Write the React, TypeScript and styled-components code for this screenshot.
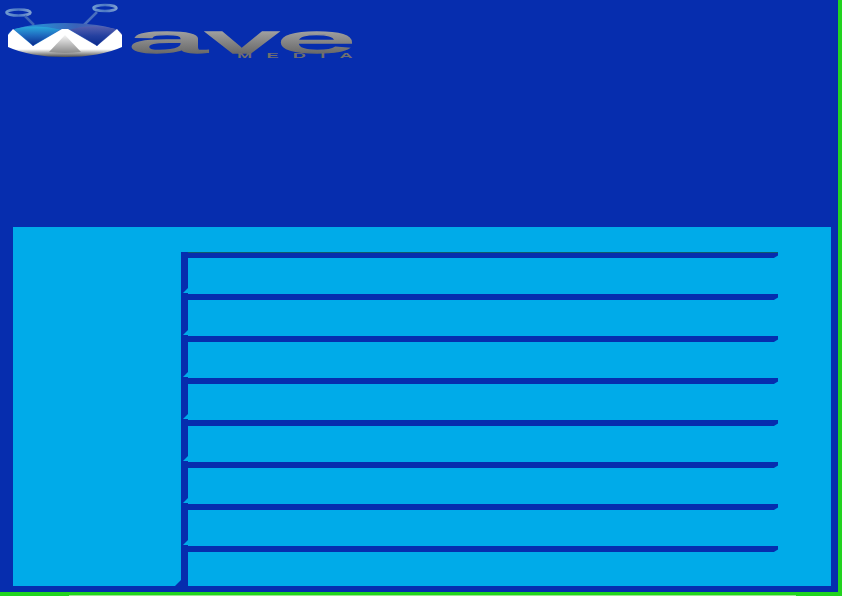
import React from "react";
import styled, { createGlobalStyle } from "styled-components";

const Global = createGlobalStyle`
  html, body { margin: 0; padding: 0; background: #22d41e; overflow: hidden; }
  body { font-family: "Liberation Sans", Arial, sans-serif; }
`;

const Frame = styled.div`
  width: 842px;
  height: 596px;
  box-sizing: border-box;
  padding: 0 4px 4px 0;
  background: #22d41e;
`;

const Stage = styled.div`
  height: 100%;
  display: flex;
  flex-direction: column;
  background: #062dae;
`;

const Header = styled.header`
  height: 227px;
  flex: none;
  display: flex;
  align-items: flex-start;
`;

const LogoArt = styled.svg`
  display: block;
  width: 400px;
  height: 70px;
`;

const Panel = styled.main`
  flex: 1;
  margin: 0 7px 6px 13px;
  display: grid;
  grid-template-columns: 168px 1fr;
  background: #00abe9;
`;

const Sidebar = styled.aside`
  position: relative;
  overflow: hidden;
`;

const SideCorner = styled.span`
  position: absolute;
  right: 0;
  bottom: 0;
  border-style: solid;
  border-width: 0 0 6px 6px;
  border-color: transparent transparent #062dae transparent;
`;

const List = styled.div`
  padding-top: 25px;
  display: flex;
  flex-direction: column;
`;

const Row = styled.div<{ $last?: boolean }>`
  position: relative;
  height: ${(p) => (p.$last ? "40px" : "42px")};
  box-sizing: border-box;
  border-left: 7px solid #062dae;
`;

const RowBar = styled.div<{ $first?: boolean }>`
  height: 6px;
  width: 590px;
  background: #062dae;
  box-sizing: border-box;
  border-top: ${(p) => (p.$first ? "1px solid #0f5a6c" : "0")};
  clip-path: polygon(0 0, 100% 0, 100% 60%, 99.3% 100%, 0 100%);
`;

const Notch = styled.span`
  position: absolute;
  left: -5px;
  bottom: 1px;
  border-style: solid;
  border-width: 0 0 5px 5px;
  border-color: transparent transparent #00abe9 transparent;
`;

const FootLine = styled.div`
  position: fixed;
  left: 69px;
  top: 595px;
  width: 727px;
  height: 1px;
  background: #9ee58f;
`;

function Logo() {
  return (
    <LogoArt viewBox="0 0 400 70" role="img" aria-label="Wave Media">
      <defs>
        <linearGradient id="dish" x1="0" x2="1" y1="0" y2="0">
          <stop offset="0" stopColor="#2f7fd0" />
          <stop offset="0.3" stopColor="#2b86cf" />
          <stop offset="0.6" stopColor="#3a62b8" />
          <stop offset="1" stopColor="#5f68b2" />
        </linearGradient>
        <linearGradient id="rim" x1="0" x2="0" y1="0" y2="1">
          <stop offset="0" stopColor="#ffffff" />
          <stop offset="0.72" stopColor="#ffffff" />
          <stop offset="0.84" stopColor="#b0b0b0" />
          <stop offset="1" stopColor="#505050" />
        </linearGradient>
        <linearGradient id="peak" x1="0" x2="0" y1="0" y2="1">
          <stop offset="0" stopColor="#f6f6f6" />
          <stop offset="1" stopColor="#8a8a8a" />
        </linearGradient>
        <linearGradient id="veeLeft" x1="0" x2="0" y1="0" y2="1">
          <stop offset="0" stopColor="#2aa9dc" />
          <stop offset="0.45" stopColor="#1f6cc0" />
          <stop offset="1" stopColor="#0a2a8c" />
        </linearGradient>
        <linearGradient id="veeRight" x1="0" x2="0" y1="0" y2="1">
          <stop offset="0" stopColor="#5660b0" />
          <stop offset="0.5" stopColor="#24409f" />
          <stop offset="1" stopColor="#0a2a8c" />
        </linearGradient>
        <linearGradient id="ring" x1="0" x2="1" y1="0" y2="0">
          <stop offset="0" stopColor="#6f9ad0" />
          <stop offset="0.5" stopColor="#4c78c4" />
          <stop offset="1" stopColor="#7f9fd0" />
        </linearGradient>
        <linearGradient id="word" x1="0" x2="0" y1="0" y2="1">
          <stop offset="0" stopColor="#c8c8c8" />
          <stop offset="0.4" stopColor="#959595" />
          <stop offset="1" stopColor="#585858" />
        </linearGradient>
      </defs>
      <ellipse cx="18.5" cy="12.5" rx="12" ry="3" fill="none" stroke="url(#ring)" strokeWidth="2.6" />
      <ellipse cx="105" cy="8" rx="11.5" ry="3" fill="none" stroke="url(#ring)" strokeWidth="2.6" />
      <path d="M25 16 L34 25" stroke="#3d64b8" strokeWidth="2.5" />
      <path d="M97 12 L84 25" stroke="#4a6fbe" strokeWidth="2.5" />
      <ellipse cx="65" cy="35" rx="57" ry="12" fill="url(#dish)" />
      <path d="M8 35 L13 29 L33 46 L62 29 L68 29 L97 46 L117 29 L122 35 L122 47 Q100 57 65 57 Q30 57 8 47 Z" fill="url(#rim)" />
      <path d="M14 29 L33 45.5 L60 29.5 Q36 24 14 29 Z" fill="url(#veeLeft)" />
      <path d="M70 29.5 L97 45.5 L116 29 Q92 23.5 70 29.5 Z" fill="url(#veeRight)" />
      <path d="M65 35 L81 52 Q65 54 49 52 Z" fill="url(#peak)" />
      <text
        x="128"
        y="52.5"
        fontFamily="'Liberation Sans', Arial, sans-serif"
        fontSize="38"
        textLength="228"
        lengthAdjust="spacingAndGlyphs"
        fill="url(#word)"
        stroke="url(#word)"
        strokeWidth="1.3"
      >
        ave
      </text>
      <text
        transform="translate(237 58) scale(2.6 1)"
        fontFamily="'Liberation Sans', Arial, sans-serif"
        fontWeight="700"
        fontSize="7"
        letterSpacing="5.5"
        fill="#6f6f6f"
      >
        MEDIA
      </text>
    </LogoArt>
  );
}

const rows = [0, 1, 2, 3, 4, 5, 6, 7];

export default function App() {
  return (
    <Frame>
      <Global />
      <Stage>
        <Header>
          <Logo />
        </Header>
        <Panel>
          <Sidebar>
            <SideCorner />
          </Sidebar>
          <List>
            {rows.map((r) => (
              <Row key={r} $last={r === rows.length - 1}>
                <RowBar $first={r === 0} />
                {r < rows.length - 1 && <Notch />}
              </Row>
            ))}
          </List>
        </Panel>
      </Stage>
      <FootLine />
    </Frame>
  );
}
